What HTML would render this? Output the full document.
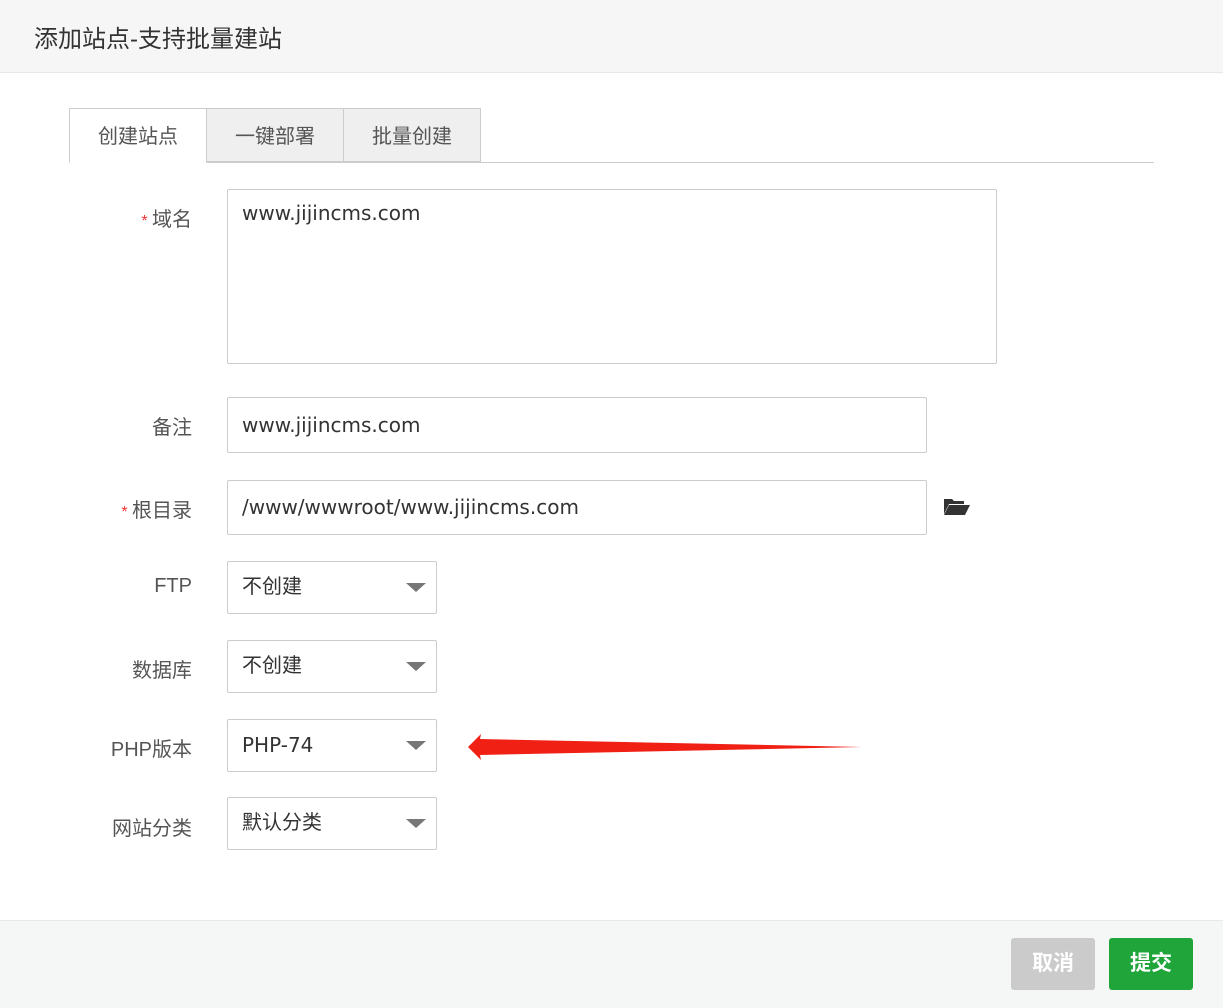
<!DOCTYPE html>
<html><head><meta charset="utf-8"><style>
body{margin:0;width:1223px;height:1007px;background:#fff;font-family:"Liberation Sans","Noto Sans CJK SC",sans-serif;color:#333;position:relative;overflow:hidden}
.a{position:absolute}
.hdr{left:0;top:0;width:1223px;height:72px;background:#f6f6f6;border-bottom:1px solid #e8e8e8}
.hdr span{position:absolute;left:34px;top:19px;font-size:24px;color:#333}
.tab{top:108px;height:54px;border:1px solid #ccc;background:#efefef;font-size:20px;line-height:56px;text-align:center;color:#555;box-sizing:border-box}
.lbl{font-size:20px;color:#555;text-align:right;width:120px;left:72px}
.star{color:#e33;font-size:16px}
.box{border:1px solid #ccc;border-radius:2px;box-sizing:border-box;font-size:20px;color:#333;padding-left:14px}
.lt{font-family:"DejaVu Sans","Noto Sans CJK SC",sans-serif;font-size:20px}
.sel{left:227px;width:210px;height:53px;line-height:51px}
.sel:after{content:"";position:absolute;right:10px;top:21px;border-left:10px solid transparent;border-right:10px solid transparent;border-top:9px solid #777}
.ftr{left:0;top:920px;width:1223px;height:87px;background:#f5f6f6;border-top:1px solid #e8e8e8}
.btn{top:938px;width:84px;height:52px;border-radius:3px;color:#fff;font-weight:bold;font-size:21px;text-align:center;line-height:52px}
</style></head><body>
<div class="a hdr"><span>添加站点-支持批量建站</span></div>
<div class="a" style="left:69px;top:162px;width:1085px;border-top:1px solid #ccc"></div>
<div class="a tab" style="left:69px;width:138px;background:#fff;border-bottom:1px solid #fff;height:55px">创建站点</div>
<div class="a tab" style="left:206px;width:138px">一键部署</div>
<div class="a tab" style="left:343px;width:138px">批量创建</div>

<div class="a lbl" style="top:203px"><span class="star">* </span> 域名</div>
<div class="a box lt" style="left:227px;top:189px;width:770px;height:175px;padding-top:10px;line-height:26px">www.jijincms.com</div>

<div class="a lbl" style="top:411px">备注</div>
<div class="a box lt" style="left:227px;top:397px;width:700px;height:56px;line-height:54px">www.jijincms.com</div>

<div class="a lbl" style="top:494px"><span class="star">* </span> 根目录</div>
<div class="a box lt" style="left:227px;top:480px;width:700px;height:55px;line-height:53px">/www/wwwroot/www.jijincms.com</div>
<svg class="a" style="left:943px;top:497px" width="28" height="20" viewBox="0 0 28 20"><path d="M1 2h8l2 2h10v3H6L1 17z" fill="#333"/><path d="M6 8h21l-5 10H1z" fill="#333"/></svg>

<div class="a lbl" style="top:575px">FTP</div>
<div class="a box sel" style="top:561px">不创建</div>
<div class="a lbl" style="top:654px">数据库</div>
<div class="a box sel" style="top:640px">不创建</div>
<div class="a lbl" style="top:733px">PHP版本</div>
<div class="a box sel lt" style="top:719px">PHP-74</div>
<div class="a lbl" style="top:812px">网站分类</div>
<div class="a box sel" style="top:797px">默认分类</div>

<svg class="a" style="left:460px;top:725px" width="420" height="45"><path d="M8 22L21 9L20 14L402 22L20 30L21 35Z" fill="#f02015"/></svg>

<div class="a ftr"></div>
<div class="a btn" style="left:1011px;background:#cbcbcb">取消</div>
<div class="a btn" style="left:1109px;background:#20a53a">提交</div>
</body></html>
